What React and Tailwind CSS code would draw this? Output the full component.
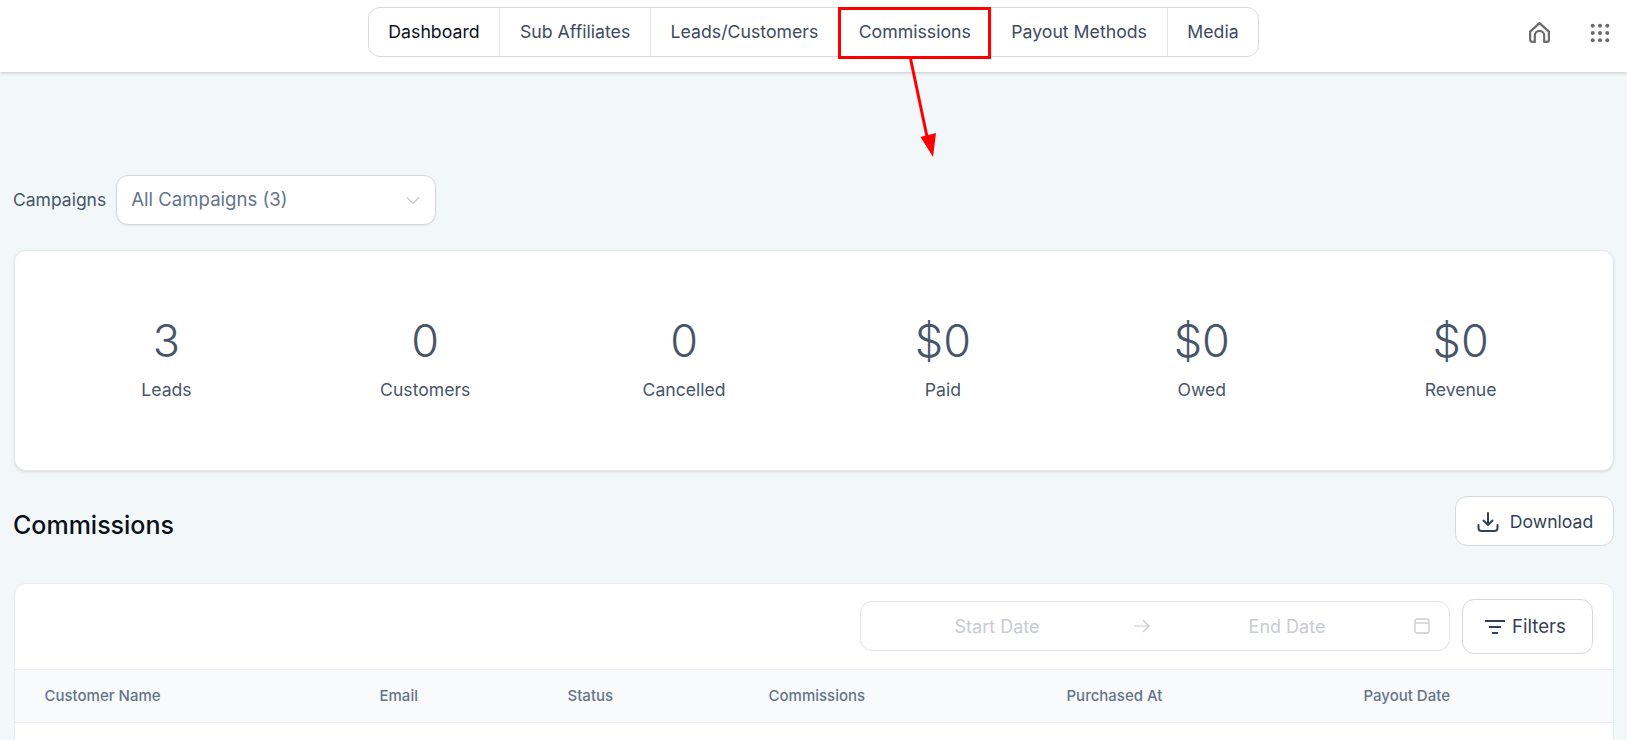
import React from "react";

const tabs = ["Dashboard", "Sub Affiliates", "Leads/Customers", "Commissions", "Payout Methods", "Media"];
const stats = [["3", "Leads"], ["0", "Customers"], ["0", "Cancelled"], ["$0", "Paid"], ["$0", "Owed"], ["$0", "Revenue"]];
const cols = ["Customer Name", "Email", "Status", "Commissions", "Purchased At", "Payout Date"];

function HomeIcon() {
  return (
    <svg width="25" height="25" viewBox="0 0 24 24" fill="none" stroke="#6b6b6b" strokeWidth="2.1" strokeLinejoin="round" strokeLinecap="round">
      <path d="M3 11.2 12 3l9 8.2V19a2 2 0 0 1-2 2h-2.500v-6a4.500 4.500 0 0 0-9 0v6H5a2 2 0 0 1-2-2z" />
    </svg>
  );
}

function GridIcon() {
  return (
    <svg width="22" height="22" viewBox="0 0 22 22" fill="#6b6b6b">
      {[3.7, 11, 18.3].map((y) => [3.7, 11, 18.3].map((x) => <circle key={`${x}-${y}`} cx={x} cy={y} r="2" />))}
    </svg>
  );
}

export default function App() {
  return (
    <div className="relative h-[740px] overflow-hidden bg-[#f2f7fa] font-['Inter',sans-serif] text-[#475569]">
      <header className="relative flex h-[72px] items-start justify-center bg-white pt-[7px] shadow-[0_1px_3px_rgba(0,0,0,0.2)]">
        <nav className="flex h-[50px] overflow-hidden rounded-[12px] border border-[#d5d9e2] bg-white text-[17.7px] text-[#3d4a60]">
          {tabs.map((t, i) => (
            <div key={t} className={`flex items-center px-[19.7px] ${i > 0 ? "border-l border-[#e2e5ec]" : ""} ${i === 0 ? "text-[#0b0f19]" : ""}`}>{t}</div>
          ))}
        </nav>
        <div className="absolute right-[16px] top-0 flex h-[65px] items-center gap-[37px]">
          <HomeIcon />
          <GridIcon />
        </div>
      </header>

      <main className="pl-[14px] pr-[13px] pt-[102.5px]">
        <div className="flex items-center gap-[10px]">
          <span className="-ml-px pt-[1px] text-[17.5px]">Campaigns</span>
          <div className="flex h-[50px] w-[320px] items-center justify-between rounded-[12px] border border-[#d3d8e2] bg-white pl-[14px] pr-[14px] text-[18.6px] text-[#64748b] shadow-[0_1px_2px_rgba(0,0,0,0.08)]">
            <span className="pt-[1px]">All Campaigns (3)</span>
            <svg width="16" height="16" viewBox="0 0 16 16" fill="none" stroke="#c4c8cf" strokeWidth="1.2"><path d="M2 5.5 8 11.5 14 5.5" /></svg>
          </div>
        </div>

        <section className="mt-[25.5px] grid h-[221px] grid-cols-6 items-center rounded-[12px] border border-[#e5e9ee] bg-white pb-[6px] pl-[22px] pr-[23px] shadow-[0_1px_3px_rgba(0,0,0,0.12)]">
          {stats.map(([v, l]) => (
            <div key={l} className="flex flex-col items-center">
              <div className="text-[45px] font-light leading-[56px] text-[#475569]">{v}</div>
              <div className="mt-[9px] text-[17.6px] leading-[24px]">{l}</div>
            </div>
          ))}
        </section>

        <div className="mt-[25px] flex h-[50px] items-center justify-between">
          <h2 className="-ml-px pt-[10px] text-[25px] font-medium text-[#0b0f19]">Commissions</h2>
          <button className="flex h-[50px] w-[159px] items-center justify-center gap-[10px] rounded-[12px] border border-[#d5d9e2] bg-white pt-[2px] text-[17.6px] text-[#334155]">
            <svg width="24" height="24" viewBox="0 0 24 24" fill="none" stroke="#334155" strokeWidth="2" strokeLinecap="round" strokeLinejoin="round">
              <path d="M12 3v12M7.500 10.500 12 15l4.500-4.500M2.500 15v3a3 3 0 0 0 3 3h13a3 3 0 0 0 3-3v-3" />
            </svg>
            Download
          </button>
        </div>

        <section className="mt-[37px] rounded-t-[12px] border border-[#e8ebef] bg-white">
          <div className="flex h-[85px] items-center justify-end gap-[12px] pr-[20px]">
            <div className="mb-[2px] flex h-[50px] w-[590px] items-center rounded-[12px] border border-[#e2e4ea] pr-[18px] text-[18px] text-[#c8cbd1]">
              <span className="w-[272px] pt-[1px] text-center">Start Date</span>
              <svg className="mt-[1px]" width="18" height="16" viewBox="0 0 18 16" fill="none" stroke="#c4c8cf" strokeWidth="1.2"><path d="M1 8h15M10 2l6 6-6 6" /></svg>
              <span className="flex-1 pl-[10px] pt-[1px] text-center">End Date</span>
              <svg className="mt-[1px]" width="18" height="18" viewBox="0 0 18 18" fill="none" stroke="#c9ccd1" strokeWidth="1.3"><rect x="2" y="2" width="14" height="14" rx="2" /><path d="M2 6h14" /></svg>
            </div>
            <button className="flex h-[55px] w-[131px] items-center justify-center gap-[6px] rounded-[12px] border border-[#d3d8e2] bg-white pr-[5px] text-[18.6px] text-[#334155]">
              <svg width="22" height="18" viewBox="0 0 22 18" fill="none" stroke="#334155" strokeWidth="2"><path d="M1 3h20M5 9h12M8 15h6" /></svg>
              Filters
            </button>
          </div>
          <div className="grid h-[54px] grid-cols-[335px_188px_201px_298px_297px_1fr] items-center border-y border-[#e8ebef] bg-[#f8fafc] pl-[29.5px] text-[15px] font-medium text-[#64748b]">
            {cols.map((c) => <div key={c}>{c}</div>)}
          </div>
          <div className="h-[40px]" />
        </section>
      </main>

      <div className="pointer-events-none absolute left-[838px] top-[7px] h-[52px] w-[153px] border-[3px] border-[#ff0000]" />
      <svg className="pointer-events-none absolute left-[900px] top-[55px]" width="50" height="110" viewBox="0 0 50 110">
        <path d="M10.600 4 27.500 84" stroke="#ff0000" strokeWidth="3" fill="none" />
        <path d="M33 102 20.500 82 36 78z" fill="#ff0000" />
      </svg>
    </div>
  );
}
